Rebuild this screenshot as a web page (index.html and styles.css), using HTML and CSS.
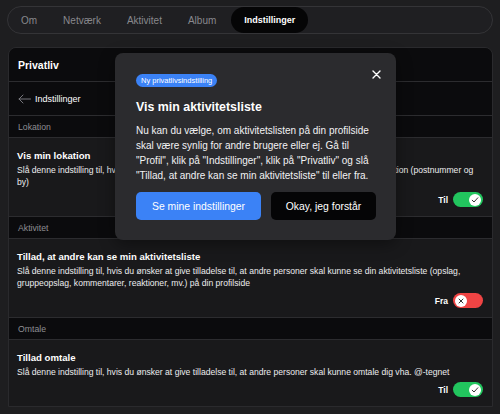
FILE: index.html
```html
<!DOCTYPE html>
<html lang="da">
  <head>
    <meta charset="utf-8">
    <link rel="stylesheet" href="styles.css">
  </head>
  <body>
    <nav class="tabs">
      <a class="tab">Om</a>
      <a class="tab">Netværk</a>
      <a class="tab">Aktivitet</a>
      <a class="tab">Album</a>
      <a class="tab active">Indstillinger</a>
    </nav>

    <section class="card">
      <header class="card-header">Privatliv</header>
      <div class="back-row">
        <svg class="back-icon" width="13" height="10" viewBox="0 0 13 10">
          <path d="M12.5 5H1 M5 1L1 5l4 4" fill="none" stroke="currentColor" stroke-width="1" stroke-linecap="round" stroke-linejoin="round"/>
        </svg>
        <span>Indstillinger</span>
      </div>

      <div class="section-label">Lokation</div>
      <div class="setting">
        <div class="setting-title">Vis min lokation</div>
        <p class="setting-desc">Slå denne indstilling til, hvis du ønsker at give tilladelse til, at andre personer skal kunne se din lokation (postnummer og by)</p>
        <div class="toggle-line">
          <span class="toggle-label">Til</span>
          <span class="toggle on">
            <span class="knob">
              <svg width="8" height="8" viewBox="0 0 8 8"><path d="M1.2 4.2l1.8 1.8 3.8-4.2" fill="none" stroke="#333" stroke-width="1" stroke-linecap="round" stroke-linejoin="round"/></svg>
            </span>
          </span>
        </div>
      </div>

      <div class="section-label">Aktivitet</div>
      <div class="setting">
        <div class="setting-title">Tillad, at andre kan se min aktivitetsliste</div>
        <p class="setting-desc">Slå denne indstilling til, hvis du ønsker at give tilladelse til, at andre personer skal kunne se din aktivitetsliste (opslag, gruppeopslag, kommentarer, reaktioner, mv.) på din profilside</p>
        <div class="toggle-line">
          <span class="toggle-label">Fra</span>
          <span class="toggle off">
            <span class="knob">
              <svg width="8" height="8" viewBox="0 0 8 8"><path d="M2 2l4 4M6 2L2 6" fill="none" stroke="#333" stroke-width="1" stroke-linecap="round"/></svg>
            </span>
          </span>
        </div>
      </div>

      <div class="section-label">Omtale</div>
      <div class="setting last">
        <div class="setting-title">Tillad omtale</div>
        <p class="setting-desc">Slå denne indstilling til, hvis du ønsker at give tilladelse til, at andre personer skal kunne omtale dig vha. @-tegnet</p>
        <div class="toggle-line">
          <span class="toggle-label">Til</span>
          <span class="toggle on">
            <span class="knob">
              <svg width="8" height="8" viewBox="0 0 8 8"><path d="M1.2 4.2l1.8 1.8 3.8-4.2" fill="none" stroke="#333" stroke-width="1" stroke-linecap="round" stroke-linejoin="round"/></svg>
            </span>
          </span>
        </div>
      </div>
    </section>

    <div class="popup">
      <button class="popup-close" type="button" aria-label="Luk">
        <svg width="9" height="9" viewBox="0 0 9 9"><path d="M1 1l7 7M8 1L1 8" stroke="#fff" stroke-width="1.4" stroke-linecap="round"/></svg>
      </button>
      <span class="badge">Ny privatlivsindstilling</span>
      <h2 class="popup-title">Vis min aktivitetsliste</h2>
      <p class="popup-text">Nu kan du vælge, om aktivitetslisten på din profilside skal være synlig for andre brugere eller ej. Gå til "Profil", klik på "Indstillinger", klik på "Privatliv" og slå "Tillad, at andre kan se min aktivitetsliste" til eller fra.</p>
      <div class="popup-actions">
        <button class="btn primary" type="button">Se mine indstillinger</button>
        <button class="btn dark" type="button">Okay, jeg forstår</button>
      </div>
    </div>
  </body>
</html>
```

FILE: styles.css
```css
body {
  font-family: "Liberation Sans", Arial, sans-serif;
  margin: 0;
  padding: 6px 7px 0 7px;
  background: #1e1e20;
  color: #fff;
  height: 414px;
  box-sizing: border-box;
  overflow: hidden;
}

.tabs {
  display: flex;
  align-items: center;
  height: 28px;
  box-sizing: border-box;
  border: 1px solid #343437;
  border-radius: 14px;
  background: #1f1f22;
}

.tab {
  display: flex;
  align-items: center;
  height: 26px;
  padding: 0 13px;
  font-size: 10px;
  color: #88888d;
}

.tab.active {
  margin-left: 2px;
  background: #050506;
  border-radius: 13px;
  color: #fff;
  font-size: 9px;
  font-weight: 700;
}

.card {
  margin: 13px 0 0 1px;
  border: 1px solid #2a2a2d;
  border-radius: 8px 8px 0 0;
  background: #19191b;
  overflow: hidden;
}

.card-header {
  height: 33px;
  display: flex;
  align-items: center;
  padding: 0 9px;
  background: #0b0b0d;
  border-bottom: 1px solid #2c2c2f;
  font-size: 10.5px;
  font-weight: 700;
}

.back-row {
  height: 33px;
  display: flex;
  align-items: center;
  gap: 4px;
  padding: 0 9px;
  background: #0b0b0d;
  border-bottom: 1px solid #2c2c2f;
  font-size: 9px;
}

.back-icon {
  color: #77777c;
}

.section-label {
  height: 21px;
  display: flex;
  align-items: center;
  padding: 0 9px;
  background: #0b0b0d;
  border-bottom: 1px solid #2c2c2f;
  font-size: 8.7px;
  color: #8e8e93;
}

.setting {
  padding: 11px 9px 9px 8px;
  border-bottom: 1px solid #2c2c2f;
}

.setting.last {
  border-bottom: 0;
}

.setting-title {
  font-size: 9.6px;
  font-weight: 700;
  line-height: 14px;
}

.setting-desc {
  margin: 1px 0 0;
  font-size: 8.6px;
  line-height: 12px;
  color: #ececee;
}

.toggle-line {
  display: flex;
  justify-content: flex-end;
  align-items: center;
  gap: 5px;
  margin-top: 4px;
}

.toggle-label {
  font-size: 8.5px;
  font-weight: 700;
}

.toggle {
  width: 30px;
  height: 15px;
  border-radius: 8px;
  display: flex;
  align-items: center;
  padding: 0 2px;
  box-sizing: border-box;
}

.toggle.on {
  background: #22c55e;
  justify-content: flex-end;
}

.toggle.off {
  background: #ef4444;
  justify-content: flex-start;
}

.knob {
  width: 12px;
  height: 12px;
  border-radius: 50%;
  background: #fff;
  display: flex;
  align-items: center;
  justify-content: center;
}

/* popup over the settings */
.popup {
  position: absolute;
  left: 115px;
  top: 53px;
  width: 281px;
  box-sizing: border-box;
  padding: 21px 18px 20px 21px;
  background: #2b2b2e;
  border-radius: 8px;
  box-shadow: 0 4px 16px rgba(0, 0, 0, 0.4);
}

.popup-close {
  position: absolute;
  top: 15px;
  right: 14px;
  width: 12px;
  height: 12px;
  padding: 0;
  border: 0;
  background: none;
  display: flex;
  align-items: center;
  justify-content: center;
}

.badge {
  display: block;
  width: fit-content;
  height: 13px;
  line-height: 13px;
  padding: 0 5px;
  border-radius: 7px;
  background: #3b82f6;
  font-size: 7.5px;
}

.popup-title {
  margin: 11px 0 0;
  font-size: 12.4px;
  font-weight: 700;
  line-height: 18px;
}

.popup-text {
  margin: 7px 0 0;
  font-size: 10px;
  line-height: 15px;
  color: #f2f2f4;
}

.popup-actions {
  display: flex;
  gap: 10px;
  margin-top: 9px;
}

.btn {
  height: 28px;
  border: 0;
  border-radius: 5px;
  font-family: inherit;
  font-size: 10.4px;
  color: #fff;
  padding: 0;
}

.btn.primary {
  width: 125px;
  background: #3b82f6;
}

.btn.dark {
  width: 105px;
  background: #050506;
}
```
